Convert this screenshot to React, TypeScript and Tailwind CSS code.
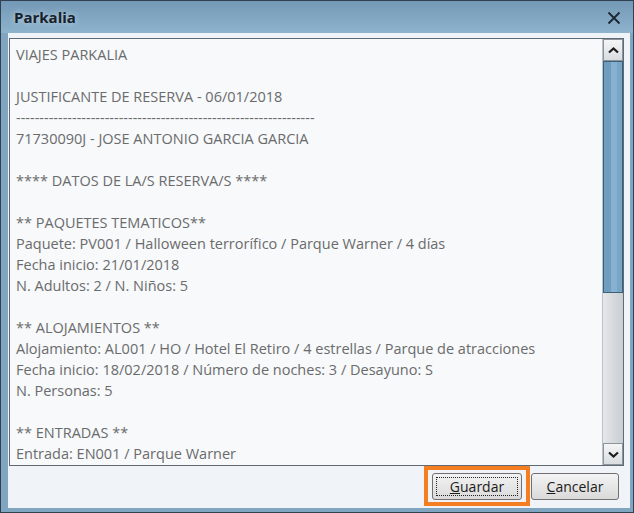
import React from "react";

const lines: string[] = [
  "VIAJES PARKALIA",
  "",
  "JUSTIFICANTE DE RESERVA - 06/01/2018",
  "----------------------------------------------------------------",
  "71730090J - JOSE ANTONIO GARCIA GARCIA",
  "",
  "**** DATOS DE LA/S RESERVA/S ****",
  "",
  "** PAQUETES TEMATICOS**",
  "Paquete: PV001 / Halloween terrorífico / Parque Warner / 4 días",
  "Fecha inicio: 21/01/2018",
  "N. Adultos: 2 / N. Niños: 5",
  "",
  "** ALOJAMIENTOS **",
  "Alojamiento: AL001 / HO / Hotel El Retiro / 4 estrellas / Parque de atracciones",
  "Fecha inicio: 18/02/2018 / Número de noches: 3 / Desayuno: S",
  "N. Personas: 5",
  "",
  "** ENTRADAS **",
  "Entrada: EN001 / Parque Warner",
];

const Chevron = ({ down }: { down?: boolean }) => (
  <svg width="11" height="7" viewBox="0 0 11 7">
    <path
      d={down ? "M1 1.5 L5.5 5.5 L10 1.5" : "M1 5.5 L5.5 1.5 L10 5.5"}
      fill="none"
      stroke="#1c1c1c"
      strokeWidth="2.2"
    />
  </svg>
);

const App: React.FC = () => {
  return (
    <div
      className="w-[634px] h-[513px] flex flex-col border border-[#2f4152] bg-[#7fa5c1] overflow-hidden"
      style={{ fontFamily: '"Open Sans", "Noto Sans", sans-serif' }}
    >
      {/* Title bar */}
      <div className="h-[32px] flex items-center justify-between pl-[13px] pr-[12px] pt-[1px] bg-gradient-to-b from-[#7499b6] to-[#8db3cd]">
        <span className="text-[15px] font-bold text-[#17212b] [text-shadow:0_0_6px_rgba(255,255,255,0.55)]">
          Parkalia
        </span>
        <svg width="14" height="14" viewBox="0 0 14 14">
          <path d="M1.5 1.5 L12.5 12.5 M12.5 1.5 L1.5 12.5" stroke="#1d2631" strokeWidth="1.8" />
        </svg>
      </div>

      {/* Content */}
      <div className="flex-1 ml-[7px] mr-[3px] mb-[4px] bg-[#f0f4f8] pl-[1px] pt-[5px] pr-[6px] flex flex-col">
        <div className="h-[428px] flex border border-[#5f6a74] bg-[#f7f9fb]">
          <div className="flex-1 pl-[6px] pt-[5px] text-[14.5px] text-[#6b6b6b] overflow-hidden">
            {lines.map((l, i) => (
              <div key={i} className="h-[21px] leading-[21px] whitespace-nowrap">
                {l}
              </div>
            ))}
          </div>

          {/* Scrollbar */}
          <div className="w-[21px] flex flex-col border-l border-[#b9c2ca]">
            <div className="h-[22px] flex items-center justify-center border border-[#8c959e] bg-gradient-to-b from-[#f5f5f5] to-[#d9dde0]">
              <Chevron />
            </div>
            <div className="h-[232px] flex border border-[#3c5f7a] bg-[#7eaacb]">
              <div className="w-[7px] bg-[#6f9dc0]" />
              <div className="flex-1 bg-[#86b1d0]" />
              <div className="w-[5px] bg-[#78a5c6]" />
            </div>
            <div className="flex-1 bg-gradient-to-r from-[#e6e8ea] via-[#d6dadd] to-[#c9ced3]" />
            <div className="h-[22px] flex items-center justify-center border border-[#8c959e] bg-gradient-to-b from-[#f5f5f5] to-[#d9dde0]">
              <Chevron down />
            </div>
          </div>
        </div>

        {/* Buttons */}
        <div className="flex justify-end items-center pr-[5px]">
          <div className="w-[106px] h-[40px] border-4 border-[#f47e20] flex items-center justify-center">
            <button className="w-[90px] h-[27px] rounded-[3px] border border-[#707070] bg-gradient-to-b from-[#f3f3f3] to-[#dadada] p-[3px]">
              <div className="w-full h-full border border-dotted border-[#222] flex items-center justify-center text-[14px] text-[#1b1b1b]">
                <span>
                  <span className="underline">G</span>uardar
                </span>
              </div>
            </button>
          </div>
          <button className="ml-[1px] w-[88px] h-[27px] rounded-[3px] border border-[#707070] bg-gradient-to-b from-[#f3f3f3] to-[#dadada] text-[14px] text-[#1b1b1b]">
            <span className="underline">C</span>ancelar
          </button>
        </div>
      </div>
    </div>
  );
};

export default App;
